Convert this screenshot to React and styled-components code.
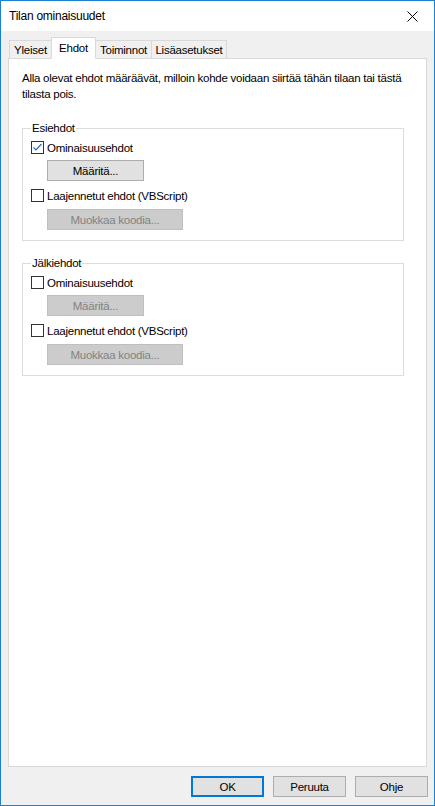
import React from 'react'
import styled, { createGlobalStyle } from 'styled-components'

const GlobalStyle = createGlobalStyle`
  html, body {
    margin: 0;
    padding: 0;
    background: #f0f0f0;
  }
  body {
    font-family: "Liberation Sans", Arial, sans-serif;
    font-size: 11.5px;
    letter-spacing: -0.25px;
    color: #000;
  }
`

const Window = styled.div`
  box-sizing: border-box;
  width: 435px;
  height: 806px;
  border: 1px solid #1a80d6;
  display: flex;
  flex-direction: column;
  background: #f0f0f0;
`

const TitleBar = styled.div`
  height: 30px;
  background: #fff;
  display: flex;
  align-items: center;
  justify-content: space-between;
  padding: 0 16px 0 8px;
`

const Title = styled.span`
  font-size: 12px;
  line-height: 16px;
`

const CloseIcon = styled.svg`
  width: 11px;
  height: 11px;
  display: block;
`

const Client = styled.div`
  flex: 1;
  display: flex;
  flex-direction: column;
  padding: 6px 7px 8px 7px;
`

const TabStrip = styled.div`
  display: flex;
  align-items: flex-end;
  padding-left: 1px;
  margin-bottom: -1px;
  position: relative;
  z-index: 1;
`

const Tab = styled.div`
  box-sizing: border-box;
  width: ${p => p.$w}px;
  height: ${p => (p.$active ? '22px' : '19px')};
  padding-top: ${p => (p.$active ? '2px' : '1px')};
  text-align: center;
  border: 1px solid #d9d9d9;
  border-bottom: ${p => (p.$active ? '1px solid #fff' : '1px solid #d9d9d9')};
  border-left: ${p => (p.$first || p.$active ? '1px solid #d9d9d9' : 'none')};
  border-right: ${p => (p.$beforeActive ? 'none' : '1px solid #d9d9d9')};
  background: ${p => (p.$active ? '#fff' : '#f0f0f0')};
  line-height: 16px;
  white-space: nowrap;
`

const Panel = styled.div`
  flex: 1;
  background: #fff;
  border: 1px solid #d9d9d9;
  padding: 11px 22px 0 13px;
`

const Description = styled.p`
  margin: 0;
  line-height: 16px;
  white-space: nowrap;
`

const Group = styled.fieldset`
  margin: ${p => p.$gap}px 0 0 0;
  padding: 3px 8px 10px 8px;
  border: 1px solid #dcdcdc;
`

const Legend = styled.legend`
  padding: 0 1px;
  margin-left: 0;
  line-height: 16px;
`

const CheckRow = styled.label`
  display: flex;
  align-items: center;
  height: 17px;
  gap: 3px;
  margin-top: ${p => p.$top || 0}px;
`

const Box = styled.span`
  box-sizing: border-box;
  width: 13px;
  height: 13px;
  border: 1px solid #333;
  background: #fff;
  display: flex;
  align-items: center;
  justify-content: center;
`

const CheckMark = styled.svg`
  width: 11px;
  height: 11px;
  display: block;
`

const Button = styled.button`
  box-sizing: border-box;
  display: block;
  width: ${p => p.$w}px;
  height: 21px;
  margin: ${p => p.$top || 0}px 0 0 16px;
  padding: 0;
  font-family: inherit;
  font-size: inherit;
  letter-spacing: inherit;
  color: ${p => (p.disabled ? '#838383' : '#000')};
  background: ${p => (p.disabled ? '#cccccc' : '#e1e1e1')};
  border: 1px solid ${p => (p.disabled ? '#bfbfbf' : '#adadad')};
  border-radius: 0;
`

const Footer = styled.div`
  display: flex;
  justify-content: flex-end;
  gap: 9px;
  margin-top: 9px;
  margin-right: -1px;
`

const DialogButton = styled.button`
  box-sizing: border-box;
  width: 73px;
  height: 21px;
  padding: 0;
  font-family: inherit;
  font-size: inherit;
  letter-spacing: inherit;
  color: #000;
  background: #e1e1e1;
  border: ${p => (p.$default ? '2px solid #0078d7' : '1px solid #adadad')};
  border-radius: 0;
`

const Check = ({ checked, label, top }) => (
  <CheckRow $top={top}>
    <Box>
      {checked && (
        <CheckMark viewBox="0 0 11 11">
          <path d="M1.5 5.5 L4 8 L9.5 2" fill="none" stroke="#1e6fc4" strokeWidth="1.2" />
        </CheckMark>
      )}
    </Box>
    <span>{label}</span>
  </CheckRow>
)

const ConditionGroup = ({ title, gap, checked }) => (
  <Group $gap={gap}>
    <Legend>{title}</Legend>
    <Check checked={checked} label="Ominaisuusehdot" />
    <Button $w={97} $top={4} disabled={!checked}>Määritä...</Button>
    <Check label="Laajennetut ehdot (VBScript)" top={6} />
    <Button $w={136} $top={5} disabled>Muokkaa koodia...</Button>
  </Group>
)

export default function App() {
  return (
    <>
      <GlobalStyle />
      <Window>
        <TitleBar>
          <Title>Tilan ominaisuudet</Title>
          <CloseIcon viewBox="0 0 11 11">
            <path d="M0.5 0.5 L10.5 10.5 M10.5 0.5 L0.5 10.5" stroke="#000" strokeWidth="1" />
          </CloseIcon>
        </TitleBar>
        <Client>
          <TabStrip>
            <Tab $w={42} $first $beforeActive>Yleiset</Tab>
            <Tab $w={45} $active>Ehdot</Tab>
            <Tab $w={56}>Toiminnot</Tab>
            <Tab $w={75}>Lisäasetukset</Tab>
          </TabStrip>
          <Panel>
            <Description>
              Alla olevat ehdot määräävät, milloin kohde voidaan siirtää tähän tilaan tai tästä
              <br />
              tilasta pois.
            </Description>
            <ConditionGroup title="Esiehdot" gap={18} checked />
            <ConditionGroup title="Jälkiehdot" gap={14} />
          </Panel>
          <Footer>
            <DialogButton $default>OK</DialogButton>
            <DialogButton>Peruuta</DialogButton>
            <DialogButton>Ohje</DialogButton>
          </Footer>
        </Client>
      </Window>
    </>
  )
}
